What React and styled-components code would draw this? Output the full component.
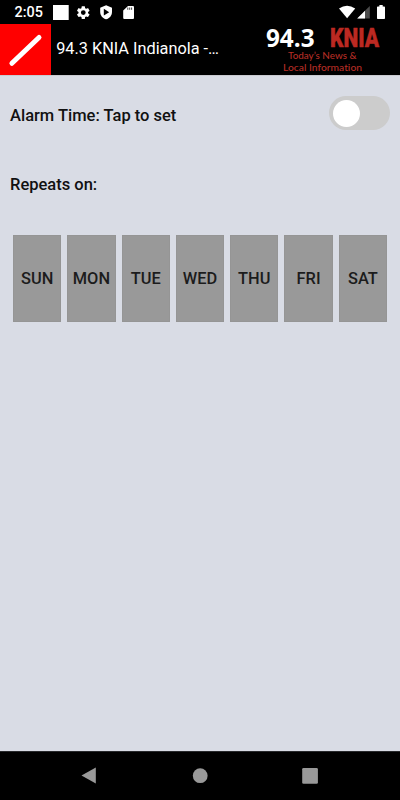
import React from "react";
import styled, { createGlobalStyle } from "styled-components";

const GlobalStyle = createGlobalStyle`
  * { box-sizing: border-box; }
  body { margin: 0; background: #d9dce5; font-family: Roboto, sans-serif; }
`;

const Screen = styled.div`
  display: flex;
  flex-direction: column;
  width: 400px;
  height: 800px;
  overflow: hidden;
  background: #d9dce5;
  color: #111;
`;

const StatusBar = styled.div`
  display: flex;
  justify-content: space-between;
  height: 24px;
  background: #000;
  color: #fff;
`;

const StatusGroup = styled.div`
  display: flex;
  padding-left: ${(p) => p.$inset || 0}px;
`;

const Clock = styled.span`
  width: 38.5px;
  font-size: 14.4px;
  font-weight: 500;
  line-height: 26px;
  white-space: nowrap;
`;

const Header = styled.header`
  display: flex;
  align-items: stretch;
  height: 51px;
  background: #000;
  color: #fff;
`;

const BackTile = styled.button`
  width: 51px;
  padding: 0;
  border: 0;
  background: #f00;
  svg { display: block; }
`;

const Title = styled.h1`
  width: 204px;
  margin: 0;
  padding-left: 5.2px;
  font-size: 16.3px;
  font-weight: 400;
  line-height: 49px;
  white-space: nowrap;
`;

const LogoDrawing = styled.svg`
  display: block;
  overflow: visible;
`;

const Frequency = styled.text`
  fill: #fff;
  font: 700 25px "Open Sans", sans-serif;
`;

const CallSign = styled.text`
  fill: #bc2922;
  stroke: #bc2922;
  stroke-width: 0.5px;
  font: 900 26px Roboto, sans-serif;
`;

const Tagline = styled.text`
  fill: #b52d25;
  font: 500 9.7px Lato, sans-serif;
  font-variant-ligatures: none;
`;

const Content = styled.main`
  flex: 1;
  border-top: 1px solid #c9cad0;
`;

const AlarmRow = styled.div`
  display: flex;
  justify-content: space-between;
  height: 34px;
  margin: 20px 10px 0;
`;

const Label = styled.div`
  font-size: 16.5px;
  font-weight: 500;
  line-height: 39px;
  white-space: nowrap;
`;

const RepeatLabel = styled(Label)`
  margin: 35px 10px 0;
`;

const Switch = styled.button`
  display: flex;
  align-items: center;
  width: 61px;
  height: 34px;
  padding: 0 4px;
  border: 0;
  border-radius: 17px;
  background: #ccc;
`;

const Knob = styled.span`
  width: 27px;
  height: 27px;
  border-radius: 50%;
  background: #fff;
`;

const Days = styled.div`
  display: grid;
  grid-template-columns: repeat(7, 1fr);
  gap: 6px;
  margin: 31px 13px 0;
`;

const Day = styled.button`
  height: 87px;
  padding: 0;
  border: 1px solid #959595;
  background: #999;
  color: #1c1c1c;
  font: 500 16.4px Roboto, sans-serif;
`;

const NavBar = styled.nav`
  display: flex;
  justify-content: space-between;
  height: 49px;
  padding: 0 80px;
  border-top: 1px solid #28292c;
  background: #000;
`;

const NavButton = styled.button`
  width: 20px;
  height: 48px;
  padding: 0;
  border: 0;
  background: none;
  svg { display: block; }
`;

const DAYS = ["SUN", "MON", "TUE", "WED", "THU", "FRI", "SAT"];

const Notifications = () => (
  <svg width="90" height="24" viewBox="53 0 90 24" fill="#fff">
    <rect x="53" y="5" width="15.7" height="15" />
    <g transform="translate(75.3 4.6) scale(.665)">
      <path d="M19.14 12.94c.04-.3.06-.61.06-.94s-.02-.64-.07-.94l2.03-1.58a.49.49 0 0 0 .12-.61l-1.92-3.32a.49.49 0 0 0-.59-.22l-2.39.96a7 7 0 0 0-1.62-.94l-.36-2.54a.48.48 0 0 0-.48-.41h-3.84a.47.47 0 0 0-.47.41l-.36 2.54c-.59.24-1.13.57-1.62.94l-2.39-.96a.47.47 0 0 0-.59.22L2.74 8.87a.47.47 0 0 0 .12.61l2.03 1.58a6 6 0 0 0 0 1.88l-2.03 1.58a.49.49 0 0 0-.12.61l1.92 3.32c.12.22.37.29.59.22l2.39-.96c.5.38 1.03.7 1.62.94l.36 2.54c.05.24.24.41.48.41h3.84c.24 0 .44-.17.47-.41l.36-2.54a7 7 0 0 0 1.62-.94l2.39.96c.22.08.47 0 .59-.22l1.92-3.32a.47.47 0 0 0-.12-.61zM12 15.6a3.6 3.6 0 1 1 0-7.2 3.6 3.6 0 0 1 0 7.2z" />
    </g>
    <path d="M106.1 5.3 112 7.8v4.1c0 3.4-2.5 6.5-5.9 7.4-3.4-.9-5.9-4-5.9-7.4V7.8z" />
    <path d="M103.8 8.8v6.7l5.4-3.3z" fill="#000" />
    <path d="M128 6h4.700c.8 0 1.300.5 1.300 1.300v10.400c0 .8-.5 1.300-1.300 1.300h-8.200c-.8 0-1.300-.5-1.300-1.300v-7.100z" />
    <path d="M127.800 7.500v2.300M129.700 7.500v2.300M131.600 7.500v2.300" stroke="#444" strokeWidth="1" />
  </svg>
);

const SystemStatus = () => (
  <svg width="62" height="24" viewBox="338 0 62 24" fill="#fff">
    <path d="M339 8.600q8-5.600 16.200 0L347.100 18.300z" />
    <path d="M369.800 6v12.600h-12.600z" fill="#4d4d4d" />
    <path d="M365 10.800v7.800h-7.800z" />
    <path d="M379.400 5h3.300v1.400h1.300c.6 0 1 .4 1 1v10.500c0 .6-.4 1-1 1h-6c-.6 0-1-.4-1-1V7.400c0-.6.4-1 1-1h1.400z" />
  </svg>
);

const StationLogo = () => (
  <LogoDrawing width="140" height="51" viewBox="255 24 140 51">
    <Frequency x="266" y="46.500" textLength="48.500" lengthAdjust="spacingAndGlyphs">94.3</Frequency>
    <CallSign x="330" y="46.700" textLength="49" lengthAdjust="spacingAndGlyphs">KNIA</CallSign>
    <Tagline x="288" y="59" textLength="68.500" lengthAdjust="spacingAndGlyphs">Today’s News &amp;</Tagline>
    <Tagline x="283" y="70.800" textLength="79" lengthAdjust="spacingAndGlyphs">Local Information</Tagline>
  </LogoDrawing>
);

export default function App() {
  return (
    <>
      <GlobalStyle />
      <Screen>
        <StatusBar>
          <StatusGroup $inset={14.5}>
            <Clock>2:05</Clock>
            <Notifications />
          </StatusGroup>
          <StatusGroup>
            <SystemStatus />
          </StatusGroup>
        </StatusBar>
        <Header>
          <BackTile aria-label="Back">
            <svg width="51" height="51" viewBox="0 24 51 51">
              <path d="M11.900 63.300 39 37.500" stroke="#fff" strokeWidth="5" strokeLinecap="round" />
            </svg>
          </BackTile>
          <Title>94.3 KNIA Indianola -…</Title>
          <StationLogo />
        </Header>
        <Content>
          <AlarmRow>
            <Label>Alarm Time: Tap to set</Label>
            <Switch role="switch" aria-checked="false" aria-label="Alarm">
              <Knob />
            </Switch>
          </AlarmRow>
          <RepeatLabel>Repeats on:</RepeatLabel>
          <Days>
            {DAYS.map((day) => (
              <Day key={day}>{day}</Day>
            ))}
          </Days>
        </Content>
        <NavBar>
          <NavButton aria-label="Back">
            <svg width="20" height="48" viewBox="80 752 20 48"><path d="M95.800 767.500v16L81.500 775.500z" fill="#999" /></svg>
          </NavButton>
          <NavButton aria-label="Home">
            <svg width="20" height="48" viewBox="190 752 20 48"><circle cx="200.200" cy="775.700" r="7.400" fill="#999" /></svg>
          </NavButton>
          <NavButton aria-label="Recent apps">
            <svg width="20" height="48" viewBox="300 752 20 48"><rect x="302.200" y="768" width="15.700" height="15.700" rx="1.300" fill="#999" /></svg>
          </NavButton>
        </NavBar>
      </Screen>
    </>
  );
}
